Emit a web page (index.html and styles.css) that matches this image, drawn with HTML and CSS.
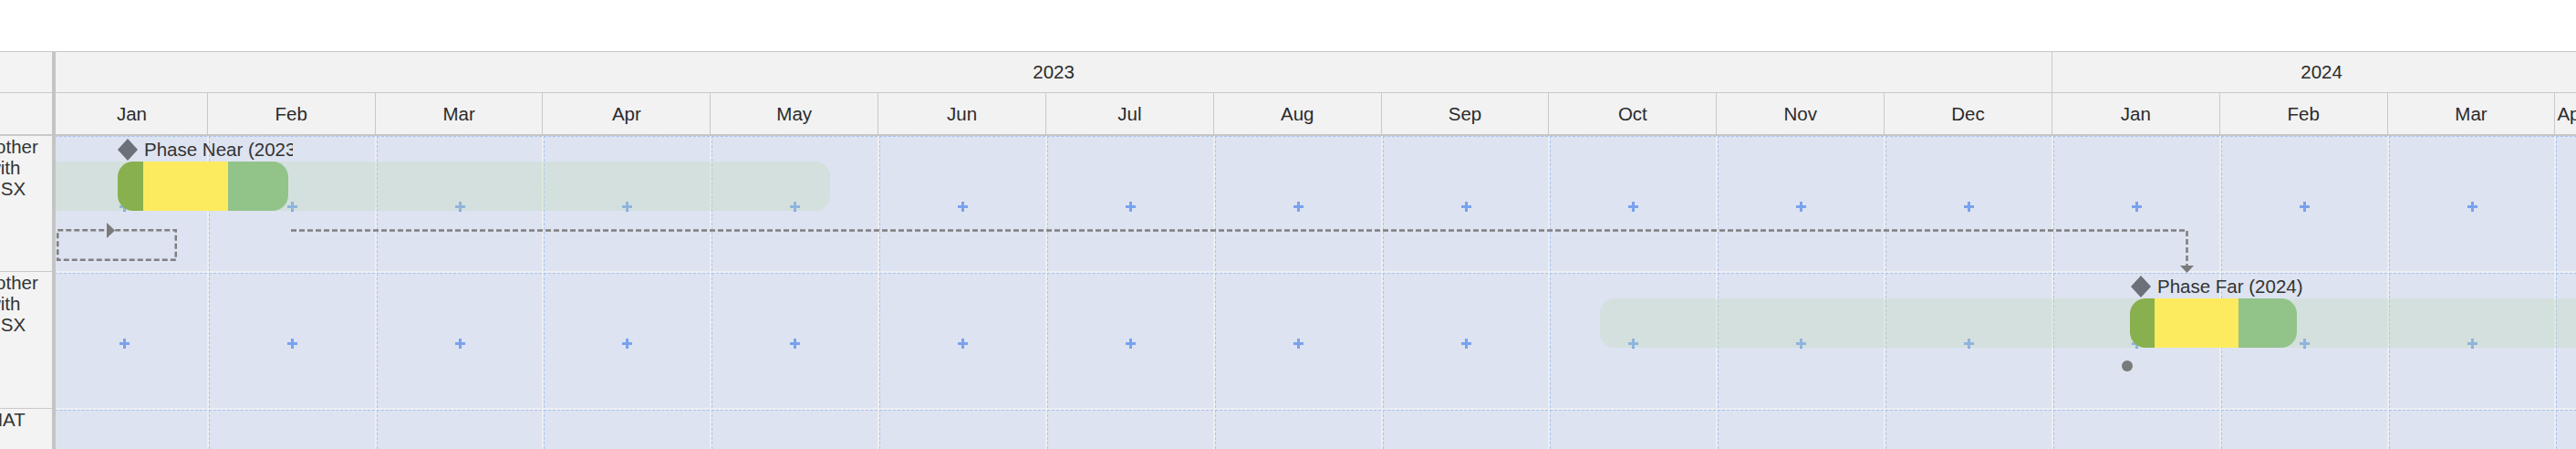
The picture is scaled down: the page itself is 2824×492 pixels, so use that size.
FILE: index.html
```html
<!DOCTYPE html>
<html lang="en">
<head>
<meta charset="utf-8">
<title>Timeline</title>
<link rel="stylesheet" href="styles.css">
</head>
<body>
<div class="page">
  <div class="gantt">
    <aside class="sidebar">
      <div class="side-head">
        <div class="side-year"></div>
        <div class="side-month"></div>
      </div>
      <div class="side-row r1"><div class="side-label indent">Another with USX</div></div>
      <div class="side-row r2"><div class="side-label indent">Another with USX</div></div>
      <div class="side-row r3"><div class="side-label">MAT</div></div>
    </aside>
    <section class="timeline">
      <div class="tl-inner">
        <div class="years">
          <div class="year y2023"><span>2023</span></div>
          <div class="year y2024"><span>2024</span></div>
        </div>
        <div class="months">
          <div class="month first">Jan</div>
          <div class="month">Feb</div>
          <div class="month">Mar</div>
          <div class="month">Apr</div>
          <div class="month">May</div>
          <div class="month">Jun</div>
          <div class="month">Jul</div>
          <div class="month">Aug</div>
          <div class="month">Sep</div>
          <div class="month">Oct</div>
          <div class="month">Nov</div>
          <div class="month">Dec</div>
          <div class="month">Jan</div>
          <div class="month">Feb</div>
          <div class="month">Mar</div>
          <div class="month edge">Apr</div>
        </div>
        <div class="tl-body">
          <div class="row">
            <div class="cell"><div class="cin"><i class="plus"></i></div></div>
            <div class="cell"><div class="cin"><i class="plus"></i></div></div>
            <div class="cell"><div class="cin"><i class="plus"></i></div></div>
            <div class="cell"><div class="cin"><i class="plus"></i></div></div>
            <div class="cell"><div class="cin"><i class="plus"></i></div></div>
            <div class="cell"><div class="cin"><i class="plus"></i></div></div>
            <div class="cell"><div class="cin"><i class="plus"></i></div></div>
            <div class="cell"><div class="cin"><i class="plus"></i></div></div>
            <div class="cell"><div class="cin"><i class="plus"></i></div></div>
            <div class="cell"><div class="cin"><i class="plus"></i></div></div>
            <div class="cell"><div class="cin"><i class="plus"></i></div></div>
            <div class="cell"><div class="cin"><i class="plus"></i></div></div>
            <div class="cell"><div class="cin"><i class="plus"></i></div></div>
            <div class="cell"><div class="cin"><i class="plus"></i></div></div>
            <div class="cell"><div class="cin"><i class="plus"></i></div></div>
            <div class="cell"><div class="cin"><i class="plus"></i></div></div>
            <div class="track" style="left:0;width:867px"></div>
            <div class="bar" style="left:86px;width:187px">
              <span class="seg seg-a" style="width:28px"></span>
              <span class="seg seg-b" style="width:93px"></span>
              <span class="seg seg-c" style="width:66px"></span>
            </div>
            <div class="milestone" style="left:86px">
              <svg class="diamond" width="22" height="24" viewBox="0 0 22 24"><polygon points="11,0 22,12 11,24 0,12"/></svg>
              <span class="ms-text">Phase Near (2023)</span>
            </div>
          </div>
          <div class="row">
            <div class="cell"><div class="cin"><i class="plus"></i></div></div>
            <div class="cell"><div class="cin"><i class="plus"></i></div></div>
            <div class="cell"><div class="cin"><i class="plus"></i></div></div>
            <div class="cell"><div class="cin"><i class="plus"></i></div></div>
            <div class="cell"><div class="cin"><i class="plus"></i></div></div>
            <div class="cell"><div class="cin"><i class="plus"></i></div></div>
            <div class="cell"><div class="cin"><i class="plus"></i></div></div>
            <div class="cell"><div class="cin"><i class="plus"></i></div></div>
            <div class="cell"><div class="cin"><i class="plus"></i></div></div>
            <div class="cell"><div class="cin"><i class="plus"></i></div></div>
            <div class="cell"><div class="cin"><i class="plus"></i></div></div>
            <div class="cell"><div class="cin"><i class="plus"></i></div></div>
            <div class="cell"><div class="cin"><i class="plus"></i></div></div>
            <div class="cell"><div class="cin"><i class="plus"></i></div></div>
            <div class="cell"><div class="cin"><i class="plus"></i></div></div>
            <div class="cell"><div class="cin"><i class="plus"></i></div></div>
            <div class="track" style="left:1711px;width:1300px"></div>
            <div class="bar" style="left:2292px;width:183px">
              <span class="seg seg-a" style="width:27px"></span>
              <span class="seg seg-b" style="width:92px"></span>
              <span class="seg seg-c" style="width:64px"></span>
            </div>
            <div class="milestone" style="left:2293px">
              <svg class="diamond" width="22" height="24" viewBox="0 0 22 24"><polygon points="11,0 22,12 11,24 0,12"/></svg>
              <span class="ms-text">Phase Far (2024)</span>
            </div>
          </div>
          <div class="row">
            <div class="cell"><div class="cin"><i class="plus"></i></div></div>
            <div class="cell"><div class="cin"><i class="plus"></i></div></div>
            <div class="cell"><div class="cin"><i class="plus"></i></div></div>
            <div class="cell"><div class="cin"><i class="plus"></i></div></div>
            <div class="cell"><div class="cin"><i class="plus"></i></div></div>
            <div class="cell"><div class="cin"><i class="plus"></i></div></div>
            <div class="cell"><div class="cin"><i class="plus"></i></div></div>
            <div class="cell"><div class="cin"><i class="plus"></i></div></div>
            <div class="cell"><div class="cin"><i class="plus"></i></div></div>
            <div class="cell"><div class="cin"><i class="plus"></i></div></div>
            <div class="cell"><div class="cin"><i class="plus"></i></div></div>
            <div class="cell"><div class="cin"><i class="plus"></i></div></div>
            <div class="cell"><div class="cin"><i class="plus"></i></div></div>
            <div class="cell"><div class="cin"><i class="plus"></i></div></div>
            <div class="cell"><div class="cin"><i class="plus"></i></div></div>
            <div class="cell"><div class="cin"><i class="plus"></i></div></div>
          </div>
          <svg class="links" width="2941" height="343" viewBox="0 0 2941 343">
            <g class="dash">
              <rect x="20.25" y="103.25" width="129.5" height="32.5"/>
              <path d="M276 103.5 H2354.5 V142"/>
            </g>
            <g class="heads">
              <path d="M74 95 L83 103.5 L74 112 Z"/>
              <path d="M2347 142 H2362 L2354.5 150 Z"/>
              <circle cx="2289" cy="252" r="6"/>
            </g>
          </svg>
        </div>
      </div>
    </section>
  </div>
</div>
</body>
</html>
```

FILE: styles.css
```css
html, body {
  margin: 0;
  padding: 0;
  background: #ffffff;
  overflow: hidden;
}

body {
  font-family: "Liberation Sans", Arial, sans-serif;
  font-size: 20.5px;
  color: #333333;
}

.page {
  width: 2824px;
  height: 492px;
  padding-top: 56px;
  box-sizing: border-box;
  overflow: hidden;
}

.gantt {
  display: flex;
  height: 436px;
  border-top: 1px solid #c9c9c9;
}

/* ---------- sidebar ---------- */
.sidebar {
  flex: 0 0 57px;
  background: #f3f3f3;
  border-right: 4px solid #c4c4c4;
  overflow: hidden;
}

.side-head {
  border-bottom: 2px solid #c9c9c9;
}

.side-year {
  height: 44px;
  border-bottom: 1px solid #c9c9c9;
}

.side-month {
  height: 45px;
}

.side-row {
  box-sizing: border-box;
  border-bottom: 1px solid #c9c9c9;
}

.side-row.r1 { height: 149px; }
.side-row.r2 { height: 150px; }
.side-row.r3 { border-bottom: none; }

.side-label {
  margin-left: -14px;
  width: 76px;
  line-height: 23px;
  color: #333333;
}

.side-label.indent {
  text-indent: -16px;
}

/* ---------- timeline ---------- */
.timeline {
  flex: 1;
  overflow: hidden;
}

.tl-inner {
  margin-left: -18px;
  width: 2941.44px;
}

.years {
  display: grid;
  grid-template-columns: 2206.08px 735.36px;
  height: 45px;
  box-sizing: border-box;
  border-bottom: 1px solid #c9c9c9;
  background: #f2f2f2;
}

.year {
  display: flex;
  align-items: center;
  color: #2b2b2b;
}

.y2023 {
  justify-content: center;
  padding-left: 18px;
}

.y2024 {
  border-left: 1px solid #c9c9c9;
}

.y2024 span {
  width: 590px;
  text-align: center;
}

.months {
  display: grid;
  grid-template-columns: repeat(16, 183.84px);
  height: 47px;
  box-sizing: border-box;
  border-bottom: 2px solid #c6c6c6;
  background: #f2f2f2;
}

.month {
  display: flex;
  align-items: center;
  justify-content: center;
  border-left: 1px solid #c9c9c9;
  color: #2b2b2b;
}

.month.first {
  padding-left: 18px;
}

.month.edge {
  justify-content: flex-start;
  padding-left: 2px;
}

.tl-body {
  position: relative;
}

.row {
  position: relative;
  display: grid;
  grid-template-columns: repeat(16, 183.84px);
  height: 148px;
}

.row + .row {
  border-top: 2px solid #eceef1;
}

.cell {
  border-left: 2px solid #eceef1;
  background: #dde3f0;
}

.cin {
  height: 100%;
  box-sizing: border-box;
  border-left: 1px dashed #a9c3f1;
  border-top: 1px dashed #a9c3f1;
  display: flex;
  align-items: center;
  justify-content: center;
  padding-top: 6px;
}

.plus {
  display: block;
  width: 11px;
  height: 11px;
  background:
    linear-gradient(#79a2ee, #79a2ee) center / 11px 3px no-repeat,
    linear-gradient(#79a2ee, #79a2ee) center / 3px 11px no-repeat;
}

.track {
  position: absolute;
  top: 28px;
  height: 54px;
  border-radius: 16px;
  background: rgba(194, 217, 183, 0.32);
}

.bar {
  position: absolute;
  top: 28px;
  height: 54px;
  display: flex;
  border-radius: 17px;
  overflow: hidden;
}

.seg { display: block; height: 100%; }
.seg-a { background: #88b04e; }
.seg-b { background: #fdeb5f; }
.seg-c { background: #92c48a; }

.milestone {
  position: absolute;
  top: 3px;
  width: 192px;
  height: 24px;
  display: flex;
  align-items: center;
  gap: 7px;
  overflow: hidden;
  white-space: nowrap;
  line-height: 24px;
  color: #333333;
}

.diamond {
  flex: 0 0 22px;
  fill: #6b7079;
}

.links {
  position: absolute;
  left: 0;
  top: 0;
  pointer-events: none;
}

.links .dash {
  fill: none;
  stroke: #7f7f7f;
  stroke-width: 2.5;
  stroke-dasharray: 6 3;
}

.links .heads {
  fill: #7a7a7a;
}
```
